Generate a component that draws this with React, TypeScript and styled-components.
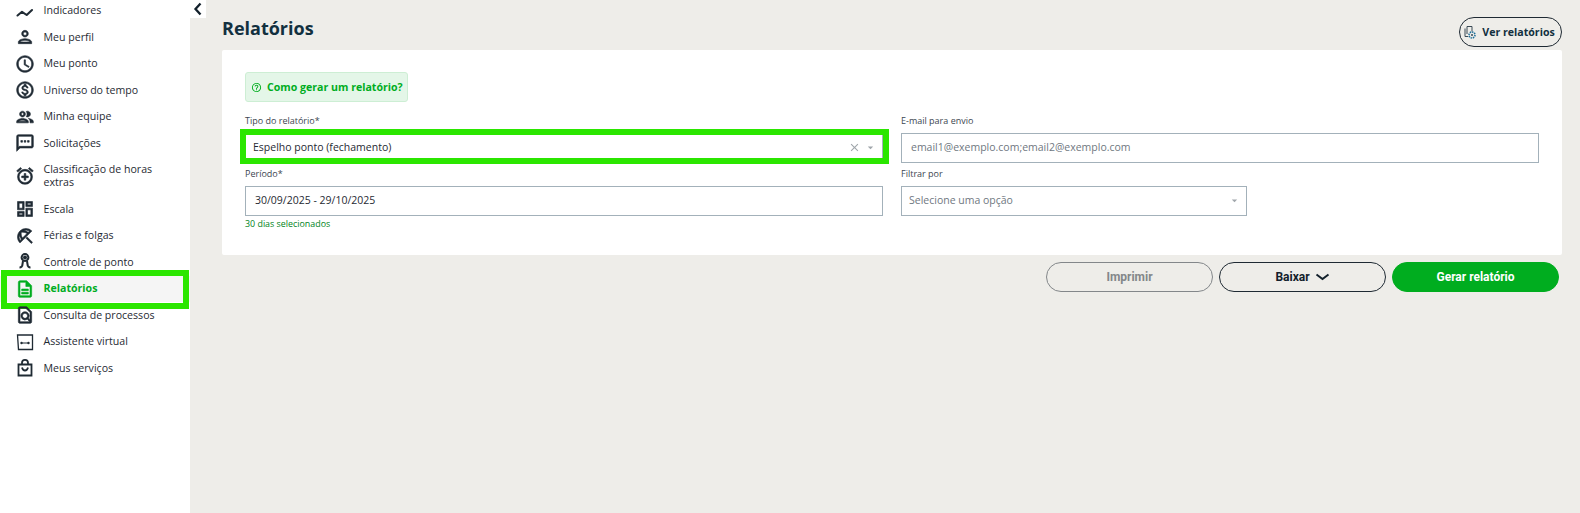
import React, { ReactNode } from "react";
import styled, { createGlobalStyle } from "styled-components";
import {
  MdOutlinePerson,
  MdOutlineAccessTime,
  MdOutlineMonetizationOn,
  MdOutlinePeople,
  MdOutlineSms,
  MdOutlineAlarmAdd,
  MdOutlineDashboard,
  MdOutlineBeachAccess,
  MdOutlineDescription,
  MdOutlineFindInPage,
  MdOutlineHelpOutline,
  MdClose,
  MdArrowDropDown,
} from "react-icons/md";

const Global = createGlobalStyle`
  html, body {
    margin: 0;
    height: 100%;
    background: #eeede9;
    font-family: "Open Sans", "Noto Sans", sans-serif;
    color: #1f2a33;
    overflow: hidden;
  }
  #root { height: 100%; }
  * { box-sizing: border-box; }
`;

const Page = styled.div`
  display: flex;
  height: 513px;
  position: relative;
`;

const Sidebar = styled.aside`
  width: 190px;
  flex: none;
  background: #fff;
  overflow: hidden;
`;

const Nav = styled.ul`
  list-style: none;
  margin: -2.5px 0 0;
  padding: 0;
`;

const NavItem = styled.li<{ $active?: boolean }>`
  position: relative;
  display: flex;
  align-items: center;
  padding: 6.75px 8px 6.75px 15px;
  font-size: 10.6px;
  line-height: 13px;
  font-weight: ${(p) => (p.$active ? 700 : 400)};
  color: ${(p) => (p.$active ? "#00ad1f" : "#1f2a33")};
  background: ${(p) => (p.$active ? "#f5f5f5" : "transparent")};
`;

const NavIcon = styled.span`
  width: 20px;
  height: 13px;
  flex: none;
  display: flex;
  align-items: center;
  justify-content: center;
  margin-right: 8.5px;
  font-size: 20px;
  /* the md icons carry an empty 24x24 path that must not get the heavier stroke */
  svg path[fill="none"] { stroke: none; }
`;

// the green annotation rectangles drawn on top of the screenshot
const Marker = styled.span<{ $inset: string }>`
  position: absolute;
  inset: ${(p) => p.$inset};
  border: 6px solid #2be600;
  pointer-events: none;
`;

const Toggle = styled.button`
  position: absolute;
  left: 190px;
  top: 0;
  width: 16px;
  height: 18px;
  padding: 0;
  border: 0;
  background: #fff;
  color: #12202b;
  display: flex;
  align-items: center;
  justify-content: center;
`;

const Main = styled.main`
  flex: 1;
  min-width: 0;
  padding: 0 18px 0 32px;
`;

const Header = styled.header`
  height: 50px;
  display: flex;
  align-items: center;
  justify-content: space-between;
  padding-top: 5px;
`;

const Title = styled.h1`
  margin: 0;
  font-size: 18px;
  line-height: 24px;
  font-weight: 700;
  color: #12303f;
`;

const ReportsButton = styled.button`
  align-self: flex-start;
  width: 103px;
  height: 30px;
  margin-top: 12px;
  border: 1px solid #1f2a33;
  border-radius: 15px;
  background: transparent;
  font-family: inherit;
  font-size: 10.6px;
  font-weight: 700;
  color: #12303f;
  display: flex;
  align-items: center;
  justify-content: center;
  gap: 5px;
  padding: 0 3px 0 0;
`;

const Panel = styled.section`
  height: 205px;
  background: #fff;
  border-radius: 2px;
  padding: 22px 23px 0;
`;

const Hint = styled.div`
  width: 163px;
  height: 30px;
  border: 1px solid #cdeed4;
  border-radius: 3px;
  background: #e4f6e8;
  color: #00ad1f;
  font-size: 10.6px;
  font-weight: 700;
  white-space: nowrap;
  display: flex;
  align-items: center;
  gap: 5px;
  padding-left: 5px;
  svg { font-size: 11px; }
`;

const FormGrid = styled.div`
  display: grid;
  grid-template-columns: 638px 638px;
  column-gap: 18px;
  row-gap: 3px;
  margin-top: 11px;
`;

const Field = styled.div`
  position: relative;
  display: flex;
  flex-direction: column;
`;

const Label = styled.label`
  height: 20px;
  line-height: 16px;
  font-size: 9px;
  color: #3c4650;
`;

const Control = styled.div<{ $width?: string; $muted?: boolean; $pad?: string }>`
  position: relative;
  width: ${(p) => p.$width || "100%"};
  height: 30px;
  border: 1px solid #a3b1ba;
  background: #fff;
  display: flex;
  align-items: center;
  padding-left: ${(p) => p.$pad || "7px"};
  padding-bottom: 2px;
  font-size: 10.5px;
  color: ${(p) => (p.$muted ? "#70787f" : "#1f2a33")};
`;

const ControlIcons = styled.span`
  margin-left: auto;
  display: flex;
  align-items: center;
  color: #a0a6ab;
  padding-right: 5px;
  font-size: 13px;
  gap: 3px;
`;

const Note = styled.div`
  height: 14px;
  margin-top: 1px;
  line-height: 14px;
  font-size: 8.9px;
  color: #00831a;
`;

const Actions = styled.div`
  display: flex;
  justify-content: flex-end;
  gap: 6px;
  margin-top: 7px;
  padding-right: 3px;
`;

const Action = styled.button<{ $kind: "off" | "line" | "solid" }>`
  width: 167px;
  height: 30px;
  border-radius: 15px;
  padding: 0;
  font-family: Roboto, "Noto Sans", sans-serif;
  font-size: 12px;
  font-weight: 700;
  display: flex;
  align-items: center;
  justify-content: center;
  gap: 5px;
  background: ${(p) => (p.$kind === "solid" ? "#00ad1f" : "transparent")};
  color: ${(p) => (p.$kind === "solid" ? "#fff" : p.$kind === "line" ? "#12202b" : "#83878a")};
  border: 1px solid
    ${(p) => (p.$kind === "solid" ? "#00ad1f" : p.$kind === "line" ? "#1f2a33" : "#83878a")};
`;

const heavy = { strokeWidth: 0.7 };

const ChartIcon = () => (
  <svg width="20" height="20" viewBox="0 0 20 20" fill="none" stroke="currentColor" strokeWidth="2.1" strokeLinejoin="round" strokeLinecap="round">
    <path d="M2.500 14.500L7 10.800l4.700 3.200 5.300-5" />
  </svg>
);

const PunchIcon = () => (
  <svg width="20" height="20" viewBox="0 0 20 20" fill="none" stroke="currentColor" strokeWidth="2">
    <circle cx="10" cy="5.500" r="3.400" />
    <circle cx="10" cy="5.500" r="1" fill="currentColor" />
    <path d="M8 9l-.8 5M12 9l.8 5M4.500 15.500c1.200 0 2-.8 2.800-1.500M15.500 15.500c-1.200 0-2-.8-2.800-1.500" />
  </svg>
);

const AssistantIcon = () => (
  <svg width="20" height="20" viewBox="0 0 20 20" fill="none" stroke="currentColor" strokeWidth="1.300">
    <path d="M2.500 3h15v14.500H3.500z" />
    <path d="M7 11h6" strokeWidth="1" />
    <circle cx="6.500" cy="11" r="1.200" fill="currentColor" stroke="none" />
    <circle cx="13.500" cy="11" r="1.200" fill="currentColor" stroke="none" />
  </svg>
);

const BagIcon = () => (
  <svg width="20" height="20" viewBox="0 0 20 20" fill="none" stroke="currentColor" strokeWidth="1.800">
    <path d="M3.500 6.500h13v11h-13z" />
    <path d="M7 6.500V4.800a3 3 0 016 0v1.700" />
    <path d="M7 9.500c.5 2 1.600 3 3 3s2.500-1 3-3" />
  </svg>
);

const ReportGearIcon = () => (
  <svg width="14" height="15" viewBox="0 0 14 15" fill="none" stroke="#3a4a55" strokeWidth="1">
    <path d="M4 1.500h5v5M4 1.500V9M2 3.500v8h3" />
    <circle cx="9" cy="10" r="3" stroke="#1e6f9a" strokeWidth="1.500" strokeDasharray="1.500 .8" />
    <circle cx="9" cy="10" r="1" fill="#3a4a55" stroke="none" />
  </svg>
);

const BackChevron = () => (
  <svg width="10" height="14" viewBox="0 0 10 14" fill="none" stroke="currentColor" strokeWidth="2.300">
    <path d="M7.500 1.500L2.500 7l5 5.500" />
  </svg>
);

const DownChevron = () => (
  <svg width="15" height="8" viewBox="0 0 15 8" fill="none" stroke="currentColor" strokeWidth="2">
    <path d="M1.500 1.500l6 4.500 6-4.500" />
  </svg>
);

const menu: { label: ReactNode; icon: ReactNode; active?: boolean; marked?: boolean }[] = [
  { label: "Indicadores", icon: <ChartIcon /> },
  { label: "Meu perfil", icon: <MdOutlinePerson {...heavy} /> },
  { label: "Meu ponto", icon: <MdOutlineAccessTime {...heavy} /> },
  { label: "Universo do tempo", icon: <MdOutlineMonetizationOn {...heavy} /> },
  { label: "Minha equipe", icon: <MdOutlinePeople {...heavy} /> },
  { label: "Solicitações", icon: <MdOutlineSms {...heavy} /> },
  { label: "Classificação de horas extras", icon: <MdOutlineAlarmAdd {...heavy} /> },
  { label: "Escala", icon: <MdOutlineDashboard {...heavy} /> },
  { label: "Férias e folgas", icon: <MdOutlineBeachAccess {...heavy} /> },
  { label: "Controle de ponto", icon: <PunchIcon /> },
  { label: "Relatórios", icon: <MdOutlineDescription {...heavy} />, active: true, marked: true },
  { label: "Consulta de processos", icon: <MdOutlineFindInPage {...heavy} /> },
  { label: "Assistente virtual", icon: <AssistantIcon /> },
  { label: "Meus serviços", icon: <BagIcon /> },
];

export default function App() {
  return (
    <Page>
      <Global />
      <Sidebar>
        <Nav>
          {menu.map((m, i) => (
            <NavItem key={i} $active={m.active}>
              <NavIcon>{m.icon}</NavIcon>
              <span>{m.label}</span>
              {m.marked && <Marker $inset="-6px 1px -7px 1px" />}
            </NavItem>
          ))}
        </Nav>
      </Sidebar>
      <Toggle aria-label="Recolher">
        <BackChevron />
      </Toggle>
      <Main>
        <Header>
          <Title>Relatórios</Title>
          <ReportsButton>
            <ReportGearIcon />
            Ver relatórios
          </ReportsButton>
        </Header>
        <Panel>
          <Hint>
            <MdOutlineHelpOutline />
            Como gerar um relatório?
          </Hint>
          <FormGrid>
            <Field>
              <Label>Tipo do relatório*</Label>
              <Control>
                Espelho ponto (fechamento)
                <ControlIcons>
                  <MdClose />
                  <MdArrowDropDown />
                </ControlIcons>
                <Marker $inset="-5px -7px -2px -6px" />
              </Control>
            </Field>
            <Field>
              <Label>E-mail para envio</Label>
              <Control $muted $pad="9px">email1@exemplo.com;email2@exemplo.com</Control>
            </Field>
            <Field>
              <Label>Período*</Label>
              <Control $pad="9px">30/09/2025 - 29/10/2025</Control>
              <Note>30 dias selecionados</Note>
            </Field>
            <Field>
              <Label>Filtrar por</Label>
              <Control $width="346px" $muted>
                Selecione uma opção
                <ControlIcons>
                  <MdArrowDropDown />
                </ControlIcons>
              </Control>
            </Field>
          </FormGrid>
        </Panel>
        <Actions>
          <Action $kind="off">Imprimir</Action>
          <Action $kind="line">
            Baixar <DownChevron />
          </Action>
          <Action $kind="solid">Gerar relatório</Action>
        </Actions>
      </Main>
    </Page>
  );
}
